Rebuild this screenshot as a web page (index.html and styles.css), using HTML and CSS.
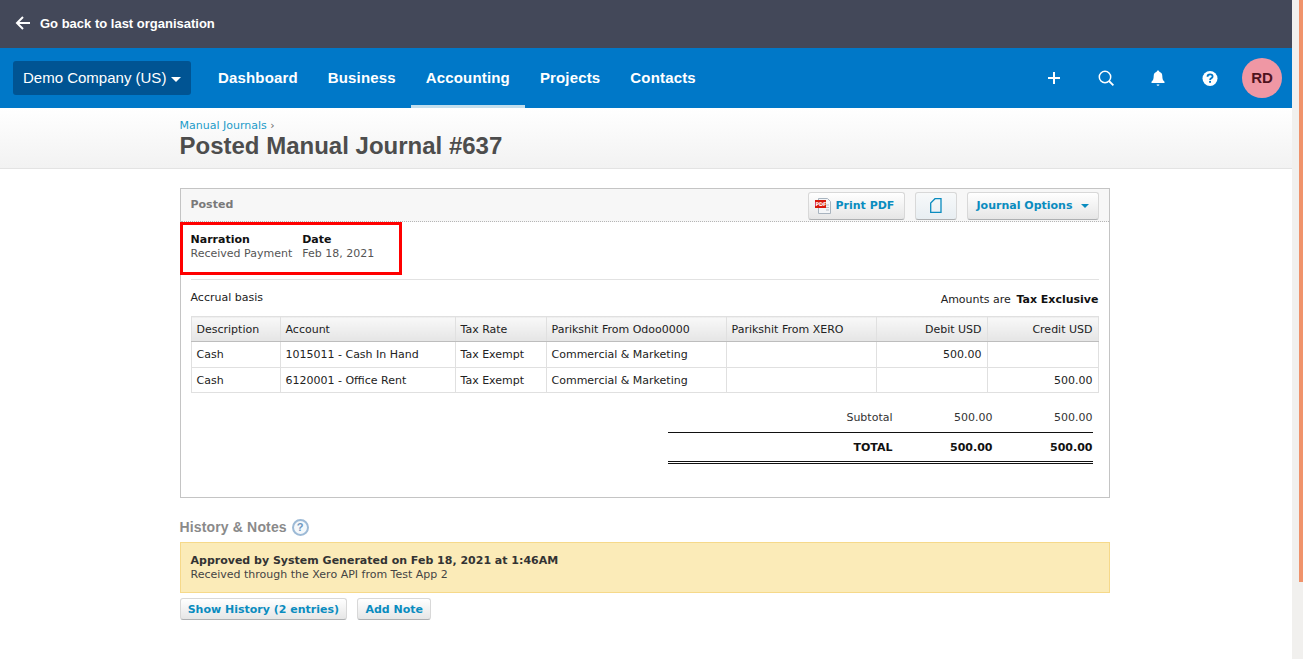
FILE: index.html
```html
<!DOCTYPE html>
<html>

<head>
	<meta charset="utf-8" />
	<title>Posted Manual Journal #637</title>
	<link rel="stylesheet" href="styles.css">
</head>

<body>
	<div class="page">
		<div class="main">
			<div class="orgbar">
				<svg class="orgbar-arrow" width="16" height="16" viewBox="0 0 16 16"><path d="M15 8H3M8 2L2 8l6 6" fill="none" stroke="#fff" stroke-width="2"/></svg>
				<span>Go back to last organisation</span>
			</div>

			<div class="nav">
				<div class="org-switch">Demo Company (US)<span class="caret-white"></span></div>
				<a class="nav-link">Dashboard</a>
				<a class="nav-link">Business</a>
				<a class="nav-link nav-link-active">Accounting</a>
				<a class="nav-link">Projects</a>
				<a class="nav-link">Contacts</a>
				<div class="nav-tools">
					<svg class="tool" width="20" height="20" viewBox="0 0 20 20"><path d="M10 4v12M4 10h12" stroke="#fff" stroke-width="2"/></svg>
					<svg class="tool" width="20" height="20" viewBox="0 0 20 20"><circle cx="9" cy="9" r="5.7" fill="none" stroke="#fff" stroke-width="1.5"/><path d="M13 13l4.4 4.4" stroke="#fff" stroke-width="1.8"/></svg>
					<svg class="tool" width="20" height="20" viewBox="0 0 20 20"><path d="M10 2.500c.9 0 1.300.6 1.300 1.300 2.100.6 3 2.200 3 4.200 0 3.200.8 4.600 2.200 5.800v1.200H3.500v-1.200C4.900 12.600 5.700 11.200 5.700 8c0-2 .9-3.600 3-4.200C8.700 3.100 9.100 2.500 10 2.500zM8.600 16.400h2.800a1.400 1.400 0 0 1-2.800 0z" fill="#fff"/></svg>
					<svg class="tool" width="20" height="20" viewBox="0 0 20 20"><circle cx="10" cy="10.500" r="7.500" fill="#fff"/><path d="M7.500 8.700c0-1.500 1.100-2.400 2.600-2.400s2.500.9 2.500 2.100c0 1.900-2.500 1.900-2.500 3.500" fill="none" stroke="#0078c8" stroke-width="1.800"/><rect x="9.100" y="12.900" width="1.900" height="1.900" fill="#0078c8"/></svg>
					<div class="avatar">RD</div>
				</div>
			</div>

			<div class="titlebar">
				<div class="crumb"><a class="crumb-link">Manual Journals</a> ›</div>
				<h1>Posted Manual Journal #637</h1>
			</div>

			<div class="content">
				<div class="card">
					<div class="card-head">
						<span class="status">Posted</span>
						<div class="card-actions">
							<a class="btn btn-pdf">
								<svg width="17" height="16" viewBox="0 0 17 16"><path d="M3.500.5h9l3 3v12h-12z" fill="#f4f6f8" stroke="#a9b4bf"/><path d="M11 7h3M11 9.500h3M11 12h3" stroke="#b5bec7"/><rect x="0" y="2" width="11" height="8" fill="#d8180c"/></svg>
								<span class="pdf-tag">PDF</span>
								Print PDF
							</a>
							<a class="btn btn-copy">
								<svg width="12" height="15" viewBox="0 0 12 15"><path d="M5 .7h6v13.600H.7V5z" fill="none" stroke="#0a8cbf" stroke-width="1.300"/></svg>
							</a>
							<a class="btn btn-options">Journal Options<span class="caret-blue"></span></a>
						</div>
					</div>

					<div class="card-body">
						<div class="meta">
							<div class="meta-col">
								<strong>Narration</strong>
								<span>Received Payment</span>
							</div>
							<div class="meta-col">
								<strong>Date</strong>
								<span>Feb 18, 2021</span>
							</div>
						</div>

						<div class="basis">
							<span class="basis-left">Accrual basis</span>
							<span>Amounts are <b class="tax-mode">Tax Exclusive</b></span>
						</div>

						<table class="lines">
							<colgroup>
								<col class="c1"><col class="c2"><col class="c3"><col class="c4"><col class="c5"><col class="c6"><col class="c7">
							</colgroup>
							<thead>
								<tr>
									<th>Description</th>
									<th>Account</th>
									<th>Tax Rate</th>
									<th>Parikshit From Odoo0000</th>
									<th>Parikshit From XERO</th>
									<th class="num">Debit USD</th>
									<th class="num">Credit USD</th>
								</tr>
							</thead>
							<tbody>
								<tr class="row-first">
									<td>Cash</td>
									<td>1015011 - Cash In Hand</td>
									<td>Tax Exempt</td>
									<td>Commercial &amp; Marketing</td>
									<td></td>
									<td class="num">500.00</td>
									<td></td>
								</tr>
								<tr>
									<td>Cash</td>
									<td>6120001 - Office Rent</td>
									<td>Tax Exempt</td>
									<td>Commercial &amp; Marketing</td>
									<td></td>
									<td></td>
									<td class="num">500.00</td>
								</tr>
							</tbody>
						</table>

						<div class="totals">
							<div class="total-row total-sub">
								<span class="total-label">Subtotal</span>
								<span class="total-val">500.00</span>
								<span class="total-val">500.00</span>
							</div>
							<div class="total-row total-grand">
								<span class="total-label">TOTAL</span>
								<span class="total-val">500.00</span>
								<span class="total-val">500.00</span>
							</div>
						</div>
					</div>

					<div class="highlight"></div>
				</div>

				<div class="history-head">
					History &amp; Notes
					<span class="help">?</span>
				</div>
				<div class="note">
					<strong>Approved by System Generated on Feb 18, 2021 at 1:46AM</strong>
					<span>Received through the Xero API from Test App 2</span>
				</div>
				<div class="note-actions">
					<a class="btn btn-small">Show History (2 entries)</a>
					<a class="btn btn-small">Add Note</a>
				</div>
			</div>
		</div>

		<div class="scrollbar"><div class="scrollbar-thumb"></div></div>
	</div>
</body>

</html>
```

FILE: styles.css
```css
html,
body {
	margin: 0;
	height: 100%;
	overflow: hidden;
	background: #fff;
}

body {
	font-family: "DejaVu Sans", Verdana, sans-serif;
	font-size: 11px;
	color: #333;
}

.page {
	display: flex;
	height: 659px;
}

.main {
	flex: 1;
	min-width: 0;
}

/* fake window scrollbar */
.scrollbar {
	width: 11px;
	background: #f1f0ee;
	display: flex;
	justify-content: flex-end;
}

.scrollbar-thumb {
	width: 4px;
	height: 582px;
	background: #f0936b;
}

/* top bars */
.orgbar {
	box-sizing: border-box;
	height: 48px;
	padding: 0 0 2px 15px;
	background: #434859;
	color: #fff;
	display: flex;
	align-items: center;
	gap: 9px;
	font-family: "Liberation Sans", Arial, sans-serif;
	font-size: 13px;
	font-weight: bold;
}

.nav {
	height: 60px;
	background: #0078c8;
	display: flex;
	align-items: center;
	padding-left: 13px;
	font-family: "Liberation Sans", Arial, sans-serif;
	color: #fff;
}

.org-switch {
	box-sizing: border-box;
	width: 178px;
	height: 34px;
	margin-right: 12px;
	padding-left: 10px;
	background: #005493;
	border-radius: 3px;
	font-size: 15px;
	line-height: 34px;
	white-space: nowrap;
}

.caret-white {
	display: inline-block;
	margin-left: 5px;
	vertical-align: middle;
	border-left: 5px solid transparent;
	border-right: 5px solid transparent;
	border-top: 5px solid #fff;
}

.nav-link {
	height: 60px;
	box-sizing: border-box;
	padding: 0 15px;
	line-height: 60px;
	font-size: 15px;
	font-weight: bold;
	letter-spacing: 0.16px;
}

.nav-link-active {
	border-bottom: 3px solid #c2deed;
}

.nav-tools {
	margin-left: auto;
	margin-right: 10px;
	display: flex;
	align-items: center;
}

.tool {
	margin-right: 32px;
	display: block;
}

.tool:nth-child(4) {
	margin-right: 22px;
}

.avatar {
	width: 40px;
	height: 40px;
	border-radius: 50%;
	background: #ef97a4;
	color: #4e121d;
	font-size: 15px;
	font-weight: bold;
	line-height: 40px;
	text-align: center;
}

/* page title */
.titlebar {
	box-sizing: border-box;
	height: 61px;
	padding: 12px 0 0 179.5px;
	background: linear-gradient(#fff, #f2f2f2);
	border-bottom: 1px solid #e3e3e3;
}

.crumb {
	font-size: 11px;
	line-height: 11px;
	color: #666;
}

.crumb-link {
	color: #1d9bc9;
}

h1 {
	margin: 0;
	font-family: "Liberation Sans", Arial, sans-serif;
	font-size: 24px;
	line-height: 30px;
	font-weight: bold;
	color: #4d4d4d;
}

/* journal card */
.content {
	width: 930px;
	margin-left: 179.5px;
	padding-top: 19px;
}

.card {
	position: relative;
	box-sizing: border-box;
	height: 310px;
	border: 1px solid #c4c4c4;
}

.card-head {
	box-sizing: border-box;
	height: 33px;
	padding: 0 10px;
	background: #f7f7f7;
	border-bottom: 1px dotted #b5b5b5;
	display: flex;
	align-items: center;
	justify-content: space-between;
}

.status {
	margin-bottom: 2px;
	font-weight: bold;
	color: #7a7a7a;
}

.card-actions {
	display: flex;
	gap: 10px;
	padding-top: 1px;
}

.btn {
	box-sizing: border-box;
	display: flex;
	align-items: center;
	justify-content: center;
	border: 1px solid #d8d8d8;
	border-bottom-color: #aeb0b2;
	border-radius: 3px;
	background: linear-gradient(#fff, #e6e6e6);
	color: #0a8cbf;
	font-weight: bold;
	white-space: nowrap;
}

.btn-pdf {
	position: relative;
	width: 97px;
	height: 28px;
	justify-content: flex-start;
	padding-left: 6px;
	gap: 4px;
}

.pdf-tag {
	position: absolute;
	left: 7px;
	top: 8px;
	font-size: 5px;
	line-height: 6px;
	color: #fff;
	letter-spacing: -0.2px;
}

.btn-copy {
	width: 42px;
	height: 28px;
	background: linear-gradient(#f7f9fa, #e8eef2);
}

.btn-options {
	width: 132px;
	height: 28px;
	padding-left: 1px;
}

.caret-blue {
	margin-left: 9px;
	border-left: 4.5px solid transparent;
	border-right: 4.5px solid transparent;
	border-top: 4px solid #0a8cbf;
}

.card-body {
	padding: 0 10px;
}

.meta {
	height: 58px;
	box-sizing: border-box;
	padding-top: 11px;
	border-bottom: 1px solid #e2e2e2;
	display: flex;
	gap: 10px;
}

.meta-col {
	display: flex;
	flex-direction: column;
	line-height: 14px;
}

.meta-col strong {
	color: #111;
}

.meta-col span {
	color: #555;
}

.highlight {
	position: absolute;
	left: -1px;
	top: 32.5px;
	width: 216px;
	height: 47px;
	border: 3px solid #f00;
}

.basis {
	height: 36px;
	display: flex;
	justify-content: space-between;
	color: #222;
	line-height: 14px;
	padding-top: 11px;
	box-sizing: border-box;
}

.basis > span:last-child {
	padding-top: 2px;
}

.tax-mode {
	margin-left: 2px;
	color: #111;
}

.lines {
	width: 908px;
	border-collapse: collapse;
	table-layout: fixed;
	color: #222;
}

.c1 { width: 89px; }
.c2 { width: 175px; }
.c3 { width: 91px; }
.c4 { width: 180px; }
.c5 { width: 150px; }
.c6 { width: 111px; }
.c7 { width: 111px; }

.lines th,
.lines td {
	border: 1px solid #e0e0e0;
	padding: 0 5px;
	text-align: left;
	font-weight: normal;
	white-space: nowrap;
}

.lines th {
	height: 24px;
	background: linear-gradient(#f8f8f8, #e5e5e5);
	border-bottom-color: #bdbdbd;
}

.lines td {
	height: 24px;
}

.lines .row-first td {
	height: 25px;
}

.lines .num {
	text-align: right;
}

.totals {
	width: 425px;
	margin: 12px 0 0 477px;
	color: #333;
}

.total-row {
	display: flex;
	justify-content: flex-end;
	line-height: 14px;
}

.total-label {
	flex: 1;
	text-align: right;
}

.total-val {
	width: 100px;
	text-align: right;
}

.total-sub {
	height: 28px;
	padding-top: 6px;
	box-sizing: border-box;
	border-bottom: 1px solid #111;
}

.total-grand {
	height: 31px;
	padding-top: 8px;
	box-sizing: border-box;
	border-bottom: 3px double #111;
	color: #111;
	font-weight: bold;
}

/* history */
.history-head {
	margin-top: 20px;
	height: 18px;
	display: flex;
	align-items: center;
	gap: 5px;
	font-family: "Liberation Sans", Arial, sans-serif;
	font-size: 14px;
	font-weight: bold;
	letter-spacing: 0.15px;
	color: #8a8a8a;
}

.help {
	box-sizing: border-box;
	width: 17px;
	height: 17px;
	border: 2px solid #9dbad6;
	border-radius: 50%;
	color: #6d96bf;
	background: #f4f8fb;
	font-size: 11px;
	font-weight: bold;
	line-height: 13px;
	text-align: center;
}

.note {
	box-sizing: border-box;
	height: 51px;
	margin-top: 6px;
	padding: 11px 10px 0;
	background: #fbebb8;
	border: 1px solid #f6d98a;
	display: flex;
	flex-direction: column;
	line-height: 14px;
}

.note strong {
	color: #333;
}

.note span {
	color: #444;
}

.note-actions {
	display: flex;
	gap: 10px;
	margin-top: 5px;
}

.btn-small {
	height: 22px;
	padding: 0 7.2px;
}
```
